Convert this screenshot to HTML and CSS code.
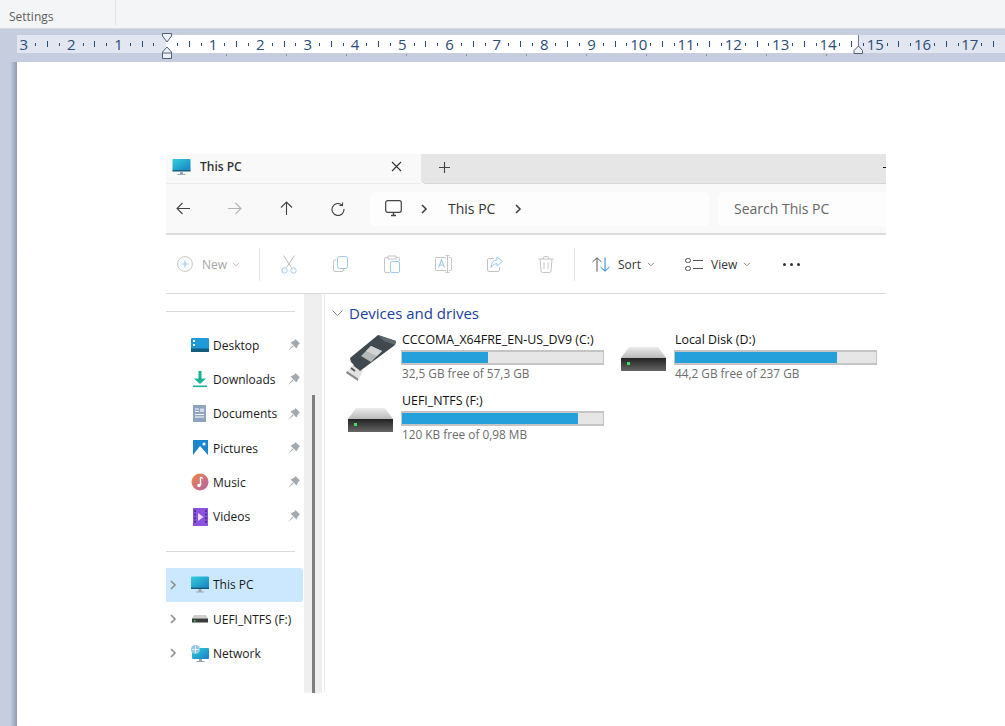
FILE: index.html
```html
<!DOCTYPE html>
<html lang="en">
<head>
    <meta charset="UTF-8">
    <meta name="viewport" content="width=device-width, initial-scale=1.0">
    <title>Settings - This PC</title>
    <link rel="stylesheet" href="styles.css">
</head>
<body>
    <svg class="defs" width="0" height="0">
        <defs>
            <linearGradient id="screen" x1="0" y1="0" x2="1" y2="1"><stop offset="0" stop-color="#2fd0d8"/><stop offset="1" stop-color="#1b7fc4"/></linearGradient>
            <linearGradient id="music" x1="0" y1="0" x2="1" y2="1"><stop offset="0" stop-color="#ee8a45"/><stop offset="1" stop-color="#b25ca8"/></linearGradient>
            <linearGradient id="disktop" x1="0" y1="0" x2="0" y2="1"><stop offset="0" stop-color="#ececec"/><stop offset="1" stop-color="#b9b9b9"/></linearGradient>
            <linearGradient id="diskbody" x1="0" y1="0" x2="0" y2="1"><stop offset="0" stop-color="#222"/><stop offset="1" stop-color="#666"/></linearGradient>
            <symbol id="pin" viewBox="0 0 12 12"><path d="M7.5 0 12 4.5 10.5 5.5 8.5 9.5 2.5 3.5 6.5 1.5Z M4.5 6.5 0 12 5.5 7.5Z" fill="#a3a9ad"/></symbol>
            <symbol id="chev" viewBox="0 0 8 10"><path d="M2 1 6 5 2 9" fill="none" stroke="currentColor" stroke-width="1.6"/></symbol>
            <symbol id="down" viewBox="0 0 8 5"><path d="M1 .8 4 3.8 7 .8" fill="none" stroke="currentColor"/></symbol>
            <symbol id="drive" viewBox="0 0 45 24">
                <path d="M8 0H37L45 11H0Z" fill="url(#disktop)"/>
                <rect y="11" width="45" height="13" fill="url(#diskbody)"/>
                <rect x="6" y="15" width="3" height="3" fill="#3fe05a"/>
            </symbol>
        </defs>
    </svg>

    <div class="topbar">
        <div class="settings">Settings</div>
    </div>

    <div class="ruler-band">
        <div class="ruler">
            <div class="cm"><span class="num">3</span><i></i><b></b><i></i></div>
            <div class="cm"><span class="num">2</span><i></i><b></b><i></i></div>
            <div class="cm"><span class="num">1</span><i></i><b></b><i></i></div>
            <div class="cm"><span class="num"></span><i></i><b></b><i></i></div>
            <div class="cm"><span class="num">1</span><i></i><b></b><i></i></div>
            <div class="cm"><span class="num">2</span><i></i><b></b><i></i></div>
            <div class="cm"><span class="num">3</span><i></i><b></b><i></i></div>
            <div class="cm"><span class="num">4</span><i></i><b></b><i></i></div>
            <div class="cm"><span class="num">5</span><i></i><b></b><i></i></div>
            <div class="cm"><span class="num">6</span><i></i><b></b><i></i></div>
            <div class="cm"><span class="num">7</span><i></i><b></b><i></i></div>
            <div class="cm"><span class="num">8</span><i></i><b></b><i></i></div>
            <div class="cm"><span class="num">9</span><i></i><b></b><i></i></div>
            <div class="cm"><span class="num">10</span><i></i><b></b><i></i></div>
            <div class="cm"><span class="num">11</span><i></i><b></b><i></i></div>
            <div class="cm"><span class="num">12</span><i></i><b></b><i></i></div>
            <div class="cm"><span class="num">13</span><i></i><b></b><i></i></div>
            <div class="cm"><span class="num">14</span><i></i><b></b><i></i></div>
            <div class="cm"><span class="num">15</span><i></i><b></b><i></i></div>
            <div class="cm"><span class="num">16</span><i></i><b></b><i></i></div>
            <div class="cm"><span class="num">17</span><i></i><b></b><i></i></div>
        </div>
        <div class="tabstops"></div>
        <svg class="marker-left" width="12" height="28" viewBox="0 0 12 28">
            <path d="M1.5 .5H10.5V3L6 9 1.5 3Z" fill="#eef1f6" stroke="#4f607f"/>
            <path d="M6 14 10.5 19V25.5H1.5V19Z" fill="#eef1f6" stroke="#4f607f"/>
            <path d="M1.5 20H10.5" stroke="#4f607f"/>
        </svg>
        <svg class="marker-right" width="11" height="20" viewBox="0 0 11 20">
            <path d="M5.5 0V11" stroke="#6f7f9c"/>
            <path d="M5.5 11 9.5 15.5V18.5H1V15.5Z" fill="#eef1f6" stroke="#4f607f"/>
        </svg>
    </div>

    <div class="page">
        <div class="gutter"></div>
        <div class="sheet">
            <div class="explorer">
                <div class="tabrow">
                    <div class="tab">
                        <svg width="19" height="18" viewBox="0 0 19 18"><rect x="0.5" y="1" width="18" height="12" rx="1" fill="url(#screen)"/><rect x="0.5" y="12" width="18" height="1.5" fill="#16607f"/><path d="M8 13.5H11V16H8ZM5.5 16H13.5V17H5.5Z" fill="#9aa7ad"/></svg>
                        <span class="tab-title">This PC</span>
                        <svg class="tab-close" width="11" height="11" viewBox="0 0 11 11"><path d="M1 1 10 10M10 1 1 10" stroke="#333" stroke-width="1.1"/></svg>
                    </div>
                    <div class="tab-rest">
                        <svg class="tab-plus" width="11" height="11" viewBox="0 0 11 11"><path d="M5.5 0V11M0 5.5H11" stroke="#444" stroke-width="1.1"/></svg>
                        <span class="tab-min"></span>
                    </div>
                </div>

                <div class="navrow">
                    <div class="nav-btns">
                        <svg class="nav-btn" width="15" height="13" viewBox="0 0 15 13"><path d="M14 6.5H1M6.5 1 1 6.5 6.5 12" fill="none" stroke="#444" stroke-width="1.1"/></svg>
                        <svg class="nav-btn" width="15" height="13" viewBox="0 0 15 13"><path d="M1 6.5H14M8.5 1 14 6.5 8.5 12" fill="none" stroke="#b5b5b5" stroke-width="1.1"/></svg>
                        <svg class="nav-btn" width="13" height="15" viewBox="0 0 13 15"><path d="M6.5 14V1M1 6.5 6.5 1 12 6.5" fill="none" stroke="#444" stroke-width="1.1"/></svg>
                        <svg class="nav-btn" width="14" height="14" viewBox="0 0 14 14"><path d="M11.2 3.2A6 6 0 1 0 13 7M11.5 0.5V3.5H8.5" fill="none" stroke="#444" stroke-width="1.1"/></svg>
                    </div>
                    <div class="address">
                        <svg width="17" height="17" viewBox="0 0 17 17"><rect x="0.7" y="0.7" width="15.6" height="11.6" rx="2" fill="none" stroke="#444" stroke-width="1.2"/><path d="M6 15.5H11M8.5 12.5V15.5" stroke="#444" stroke-width="1.4"/></svg>
                        <svg class="addr-chev" width="8" height="10"><use href="#chev"/></svg>
                        <span class="addr-text">This PC</span>
                        <svg class="addr-chev2" width="8" height="10"><use href="#chev"/></svg>
                    </div>
                    <div class="search">Search This PC</div>
                </div>

                <div class="toolbar">
                    <div class="new-group">
                        <svg width="16" height="16" viewBox="0 0 16 16"><circle cx="8" cy="8" r="7.4" fill="none" stroke="#c4c4c4"/><path d="M8 4.5V11.5M4.5 8H11.5" stroke="#9cc9ef" stroke-width="1.2"/></svg>
                        <span class="dim-label">New</span>
                        <svg class="caret dim" width="8" height="5"><use href="#down"/></svg>
                    </div>
                    <span class="sep"></span>
                    <div class="tool"><svg width="16" height="19" viewBox="0 0 16 19"><path d="M2.5 0.5 10.5 12.5M13.5 0.5 5.5 12.5" stroke="#bdbdbd" fill="none"/><circle cx="3.5" cy="15.5" r="2.7" fill="none" stroke="#9cc9ef"/><circle cx="12.5" cy="15.5" r="2.7" fill="none" stroke="#9cc9ef"/></svg></div>
                    <div class="tool"><svg width="15" height="16" viewBox="0 0 15 16"><path d="M3 4H1.5Q.5 4 .5 5V14Q.5 15.5 2 15.5H9Q10.5 15.5 10.5 14V13" fill="none" stroke="#c4c4c4"/><rect x="4.5" y="0.5" width="10" height="12" rx="2" fill="none" stroke="#9cc9ef"/></svg></div>
                    <div class="tool"><svg width="16" height="18" viewBox="0 0 16 18"><path d="M4 2.5H1.5Q.5 2.5 .5 3.5V16Q.5 17.5 2 17.5H6M12 2.5H14.5Q15.5 2.5 15.5 3.5V6M4 1H12V4H4Z" fill="none" stroke="#c4c4c4"/><rect x="6.5" y="6.5" width="9" height="11" rx="1.5" fill="#fff" stroke="#9cc9ef"/></svg></div>
                    <div class="tool"><svg width="17" height="18" viewBox="0 0 17 18"><path d="M11 2.5H1.5Q.5 2.5 .5 3.5V14.5Q.5 15.5 1.5 15.5H11M14 2.5H15.5Q16.5 2.5 16.5 3.5V14.5Q16.5 15.5 15.5 15.5H14M10.5 .5H14.5M12.5 .5V17.5M10.5 17.5H14.5" fill="none" stroke="#c4c4c4"/><path d="M3.5 12.5 6.5 5 9.5 12.5M4.5 10H8.5" fill="none" stroke="#9cc9ef" stroke-width="1.1"/></svg></div>
                    <div class="tool"><svg width="16" height="16" viewBox="0 0 16 16"><path d="M7 2.5H2Q.5 2.5 .5 4V14Q.5 15.5 2 15.5H11Q12.5 15.5 12.5 14V11" fill="none" stroke="#c4c4c4"/><path d="M10 .8 15.5 5.5 10 10V7.5Q6 7.5 4 11.5 4.5 4.5 10 3.5Z" fill="none" stroke="#9cc9ef"/></svg></div>
                    <div class="tool"><svg width="16" height="17" viewBox="0 0 16 17"><path d="M.5 3H15.5M5.5 3V1.5Q5.5 .5 6.5 .5H9.5Q10.5 .5 10.5 1.5V3M2 3 3 15Q3 16.5 4.5 16.5H11.5Q13 16.5 13 15L14 3M6 6.5V13M10 6.5V13" fill="none" stroke="#c4c4c4"/></svg></div>
                    <span class="sep sep-2"></span>
                    <div class="cmd cmd-sort">
                        <svg width="18" height="15" viewBox="0 0 18 15"><path d="M5 14.5V1M.5 5 5 .8 9.5 5" fill="none" stroke="#555"/><path d="M13 .5V14M8.5 10 13 14.2 17.5 10" fill="none" stroke="#1683d8"/></svg>
                        <span>Sort</span>
                        <svg class="caret" width="8" height="5"><use href="#down"/></svg>
                    </div>
                    <div class="cmd cmd-view">
                        <svg width="18" height="13" viewBox="0 0 18 13"><rect x="0.5" y="0.5" width="5" height="4" rx="2" fill="none" stroke="#555"/><rect x="0.5" y="8.5" width="5" height="4" rx="2" fill="none" stroke="#555"/><path d="M8 2.5H18M8 10.5H18" stroke="#555"/></svg>
                        <span>View</span>
                        <svg class="caret" width="8" height="5"><use href="#down"/></svg>
                    </div>
                    <div class="more"><i></i><i></i><i></i></div>
                </div>

                <div class="body">
                    <nav class="sidebar">
                        <hr class="side-line first">
                        <div class="side-item">
                            <svg class="side-icon" width="18" height="14" viewBox="0 0 18 14"><rect width="18" height="14" rx="1" fill="#1e9ad6"/><rect y="10.5" width="18" height="3.5" fill="#125c7d"/><rect x="2" y="2" width="2" height="2" fill="#fff"/><rect x="2" y="6" width="2" height="2" fill="#fff"/></svg>
                            <span>Desktop</span>
                            <svg class="pin" width="12" height="12"><use href="#pin"/></svg>
                        </div>
                        <div class="side-item">
                            <svg class="side-icon" width="18" height="18" viewBox="0 0 18 18"><path d="M7.5 1H10.5V8.5H15L9 14 3 8.5H7.5Z" fill="#19b394"/><rect x="2" y="15.5" width="14" height="1.6" fill="#19b394"/></svg>
                            <span>Downloads</span>
                            <svg class="pin" width="12" height="12"><use href="#pin"/></svg>
                        </div>
                        <div class="side-item">
                            <svg class="side-icon" width="18" height="17" viewBox="0 0 18 17"><rect x="2" width="13" height="17" fill="#8ea4c2"/><path d="M4 4H8M4 6.5H8" stroke="#fff" stroke-width="1.2"/><path d="M4 9.5H13M4 12H13" stroke="#fff"/><rect x="9" y="3.5" width="4" height="3.5" fill="#fff" opacity=".6"/></svg>
                            <span>Documents</span>
                            <svg class="pin" width="12" height="12"><use href="#pin"/></svg>
                        </div>
                        <div class="side-item">
                            <svg class="side-icon" width="18" height="16" viewBox="0 0 18 16"><rect x="2" width="15" height="15" fill="#1a86d0"/><path d="M2 15 9 6 17 15Z" fill="#fff"/><circle cx="13" cy="4" r="1.6" fill="#fff"/></svg>
                            <span>Pictures</span>
                            <svg class="pin" width="12" height="12"><use href="#pin"/></svg>
                        </div>
                        <div class="side-item">
                            <svg class="side-icon" width="18" height="18" viewBox="0 0 18 18"><circle cx="9" cy="9" r="8.5" fill="url(#music)"/><path d="M9.5 4V12" stroke="#fff" stroke-width="1.4"/><path d="M9.5 4 12 5.5" stroke="#fff" stroke-width="1.2"/><circle cx="8" cy="12.5" r="1.7" fill="#fff"/></svg>
                            <span>Music</span>
                            <svg class="pin" width="12" height="12"><use href="#pin"/></svg>
                        </div>
                        <div class="side-item">
                            <svg class="side-icon" width="18" height="18" viewBox="0 0 18 18"><rect x="2" width="15" height="18" fill="#8a52df"/><path d="M7 5 12.5 9 7 13Z" fill="#e9dcff"/><path d="M4 2V16M15 2V16" stroke="#3f2277" stroke-width="1.4" stroke-dasharray="2 1.6"/></svg>
                            <span>Videos</span>
                            <svg class="pin" width="12" height="12"><use href="#pin"/></svg>
                        </div>
                        <hr class="side-line second">
                        <div class="side-item selected">
                            <svg class="side-chev" width="8" height="10"><use href="#chev"/></svg>
                            <svg class="side-icon" width="18" height="17" viewBox="0 0 18 17"><rect y="0.5" width="18" height="12" rx="1" fill="url(#screen)"/><rect y="11.5" width="18" height="1.5" fill="#16607f"/><path d="M7.5 13H10.5V15.5H7.5ZM5 15.5H13V16.5H5Z" fill="#9aa7ad"/></svg>
                            <span>This PC</span>
                        </div>
                        <div class="side-item">
                            <svg class="side-chev" width="8" height="10"><use href="#chev"/></svg>
                            <svg class="side-icon" width="18" height="8" viewBox="0 0 18 8"><path d="M3 0H15L17 3.5H1Z" fill="#cfcfcf"/><rect x="1" y="3.5" width="16" height="4" fill="#3b3b3b"/><rect x="3" y="5" width="1.5" height="1.5" fill="#3fe05a"/></svg>
                            <span>UEFI_NTFS (F:)</span>
                        </div>
                        <div class="side-item">
                            <svg class="side-chev" width="8" height="10"><use href="#chev"/></svg>
                            <svg class="side-icon" width="18" height="18" viewBox="0 0 18 18"><rect x="1" y="3" width="17" height="11" rx="1" fill="url(#screen)"/><path d="M8 14H11V16H8ZM5.5 16H13.5V17H5.5Z" fill="#9aa7ad"/><circle cx="4.5" cy="4.5" r="4.5" fill="#8fc7ea"/><path d="M1 4.5H8M4.5 1V8" stroke="#fff" stroke-width=".8"/></svg>
                            <span>Network</span>
                        </div>
                    </nav>
                    <div class="scrollbar"><div class="thumb"></div></div>
                    <main class="content">
                        <div class="group-head">
                            <svg width="11" height="6" viewBox="0 0 11 6"><path d="M.5 .5 5.5 5.5 10.5 .5" fill="none" stroke="#8a8a8a"/></svg>
                            <span>Devices and drives</span>
                        </div>
                        <div class="drives">
                            <div class="drive">
                                <svg class="usb" width="50" height="46" viewBox="0 0 50 46">
                                    <path d="M0 38 9 27 17 36 12 46Z" fill="#e2e2e2"/>
                                    <path d="M0 38 12 46 12 43.5 1 36Z" fill="#8b8b8b"/>
                                    <path d="M5 33 9 36M8 30 12 33" stroke="#555" stroke-width="1.8"/>
                                    <path d="M32 0 50 6 49 10 14 36 5 27 4 23Z" fill="#40494f"/>
                                    <path d="M32 0 50 6 49 10 38 6Z" fill="#5e696f"/>
                                    <path d="M25 11 36 16 25 27 15 21Z" fill="#b5b8b8"/>
                                    <path d="M25 11 36 16 31 21 20 16Z" fill="#d2d4d4"/>
                                </svg>
                                <div class="drive-info">
                                    <div class="drive-name">CCCOMA_X64FRE_EN-US_DV9 (C:)</div>
                                    <div class="bar"><div class="bar-fill" style="width:43%"></div></div>
                                    <div class="drive-free">32,5 GB free of 57,3 GB</div>
                                </div>
                            </div>
                            <div class="drive">
                                <svg class="disk" width="45" height="24"><use href="#drive"/></svg>
                                <div class="drive-info">
                                    <div class="drive-name">Local Disk (D:)</div>
                                    <div class="bar"><div class="bar-fill" style="width:81%"></div></div>
                                    <div class="drive-free">44,2 GB free of 237 GB</div>
                                </div>
                            </div>
                            <div class="drive">
                                <svg class="disk" width="45" height="24"><use href="#drive"/></svg>
                                <div class="drive-info">
                                    <div class="drive-name">UEFI_NTFS (F:)</div>
                                    <div class="bar"><div class="bar-fill" style="width:88%"></div></div>
                                    <div class="drive-free">120 KB free of 0,98 MB</div>
                                </div>
                            </div>
                        </div>
                    </main>
                </div>
            </div>
        </div>
    </div>
</body>
</html>
```
FILE: styles.css
```css
html, body {
    height: 100%;
}
body {
    margin: 0;
    overflow: hidden;
    font-family: "Open Sans", "Noto Sans", sans-serif;
    font-size: 12px;
    color: #1a1a1a;
    background: #fff;
}
svg {
    display: block;
    flex-shrink: 0;
}
.defs {
    position: absolute;
}

/* top strip */
.topbar {
    height: 28px;
    background: #f4f5f7;
    border-bottom: 1px solid #dcdcdc;
}
.settings {
    width: 106px;
    height: 25px;
    padding-left: 9px;
    line-height: 34px;
    color: #605e5c;
    border-right: 1px solid #e4e4e6;
    overflow: hidden;
}

/* ruler */
.ruler-band {
    position: relative;
    height: 33px;
    background: #c5cddf;
    padding: 6px 0 0 17px;
    box-sizing: border-box;
}
.ruler {
    display: flex;
    height: 18px;
    padding-left: 1px;
    background: linear-gradient(to right, #e2e6f0 149px, #fff 149px, #fff 841px, #e2e6f0 841px);
    overflow: hidden;
}
.cm {
    flex: 0 0 47.3px;
    display: grid;
    grid-template-columns: repeat(4, minmax(0, 1fr));
    align-items: center;
    justify-items: center;
}
.num {
    font-size: 15px;
    line-height: 18px;
    color: #2b4c78;
    white-space: nowrap;
}
.cm i {
    width: 1px;
    height: 3px;
    background: #2b4c78;
}
.cm b {
    width: 1px;
    height: 6px;
    background: #2b4c78;
}
.tabstops {
    position: absolute;
    left: 226px;
    top: 25px;
    width: 601px;
    height: 2px;
    background: repeating-linear-gradient(to right, #8f98a8 0, #8f98a8 1px, transparent 1px, transparent 60px);
}
.marker-left {
    position: absolute;
    left: 161px;
    top: 4px;
}
.marker-right {
    position: absolute;
    left: 853px;
    top: 6px;
}

/* page area */
.page {
    display: flex;
    height: 664px;
}
.gutter {
    width: 17px;
    background: linear-gradient(to right, #c5cddf 10px, #8f9ab0 17px);
}
.sheet {
    flex: 1;
    padding: 92px 0 0 149px;
}

/* explorer window picture */
.explorer {
    width: 720px;
    height: 539px;
    display: flex;
    flex-direction: column;
    background: #fff;
    overflow: hidden;
}
.tabrow {
    display: flex;
    height: 30px;
    background: #f9f9f9;
}
.tab {
    width: 255px;
    display: flex;
    align-items: center;
    padding: 0 0 4px 6px;
    box-sizing: border-box;
    background: #f9f9f9;
    border-bottom: 1px solid #ececec;
}
.tab-title {
    margin-left: 9px;
    font-weight: 600;
    color: #333;
}
.tab-close {
    margin-left: auto;
    margin-right: 19px;
}
.tab-rest {
    flex: 1;
    display: flex;
    align-items: center;
    padding: 0 0 3px 18px;
    background: #e6e6e6;
    border-bottom: 1px solid #d6d6d6;
    border-radius: 0 0 0 5px;
}
.tab-min {
    width: 3px;
    height: 1px;
    margin-left: auto;
    background: #111;
}
.navrow {
    height: 51px;
    display: flex;
    align-items: center;
    background: #f9f9f9;
    border-bottom: 2px solid #dcdcdc;
    box-sizing: border-box;
}
.nav-btns {
    width: 204px;
    display: grid;
    grid-template-columns: 51px 51px 52px 52px;
    justify-items: center;
    align-items: center;
    margin-left: -8px;
    flex-shrink: 0;
}
.address {
    width: 339px;
    height: 34px;
    margin-left: 8px;
    display: flex;
    align-items: center;
    padding-left: 15px;
    box-sizing: border-box;
    background: #fdfdfd;
    border-radius: 5px;
    color: #333;
}
.addr-chev {
    margin-left: 18px;
    color: #444;
}
.addr-text {
    margin-left: 20px;
    font-size: 14px;
}
.addr-chev2 {
    margin-left: 19px;
    color: #444;
}
.search {
    flex: 1;
    height: 34px;
    margin-left: 9px;
    padding-left: 16px;
    line-height: 34px;
    font-size: 14px;
    color: #666;
    background: #fdfdfd;
    border-radius: 5px 0 0 5px;
}

/* command bar */
.toolbar {
    height: 59px;
    display: flex;
    align-items: center;
    padding-left: 11px;
    border-bottom: 1px solid #d9d9d9;
    box-sizing: border-box;
}
.new-group {
    width: 82px;
    display: flex;
    align-items: center;
}
.dim-label {
    margin-left: 9px;
    color: #a6a6a6;
}
.caret {
    margin-left: 5px;
    color: #888;
}
.caret.dim {
    color: #bbb;
}
.sep {
    width: 1px;
    height: 33px;
    background: #e4e4e4;
    margin-right: 3px;
}
.sep-2 {
    margin-left: 2px;
    margin-right: 17px;
}
.tool {
    flex: 0 0 51.5px;
    display: flex;
    justify-content: center;
}
.cmd {
    display: flex;
    align-items: center;
    gap: 8px;
    color: #333;
}
.cmd .caret {
    margin-left: -2px;
}
.cmd-sort {
    width: 93px;
}
.cmd-view {
    width: 98px;
}
.more {
    display: flex;
    gap: 4px;
}
.more i {
    width: 3px;
    height: 3px;
    border-radius: 50%;
    background: #333;
}

/* body */
.body {
    flex: 1;
    display: flex;
    min-height: 0;
}
.sidebar {
    width: 138px;
    flex-shrink: 0;
}
.side-line {
    margin: 17px 9px 16px 0;
    height: 1px;
    border: 0;
    background: #d9d9d9;
}
.side-item {
    height: 34.3px;
    display: flex;
    align-items: center;
    padding-left: 25px;
    position: relative;
    white-space: nowrap;
}
.side-item span {
    margin-left: 4px;
}
.pin {
    position: absolute;
    left: 122px;
    top: 11px;
}
.side-chev {
    position: absolute;
    left: 3px;
    top: 12px;
    color: #8c8c8c;
}
.selected {
    margin-right: 1px;
    background: #cce8ff;
    border-radius: 0 3px 3px 0;
}
.scrollbar {
    width: 18px;
    flex-shrink: 0;
    display: flex;
    justify-content: center;
    background: #efefef;
}
.thumb {
    width: 3px;
    margin-top: 101px;
    background: #7f7f7f;
}
.content {
    flex: 1;
    margin-left: 2px;
    padding-left: 7px;
    border-left: 1px solid #ececec;
}
.group-head {
    display: flex;
    align-items: center;
    gap: 6px;
    height: 20px;
    margin-top: 9px;
    font-size: 15px;
    color: #1a3f9c;
}
.drives {
    display: grid;
    grid-template-columns: 273px 273px;
    grid-auto-rows: 60.5px;
    margin: 9px 0 0 15px;
}
.drive {
    display: flex;
    align-items: flex-start;
}
.usb {
    margin: 3px 5px 0 -1px;
}
.disk {
    margin: 15px 8px 0 1px;
}
.drive-info {
    width: 202.5px;
    flex-shrink: 0;
}
.drive-name {
    height: 16px;
    line-height: 16px;
    padding-left: 1px;
    font-size: 12.4px;
    color: #111;
    white-space: nowrap;
}
.bar {
    height: 15px;
    margin-top: 2px;
    background: #e6e6e6;
    border: solid #c4c4c4;
    border-width: 2px 1px;
    box-sizing: border-box;
}
.bar-fill {
    height: 100%;
    background: #26a0da;
}
.drive-free {
    height: 16px;
    line-height: 16px;
    padding-left: 1px;
    font-size: 11.8px;
    color: #6d6d6d;
    white-space: nowrap;
}
```
